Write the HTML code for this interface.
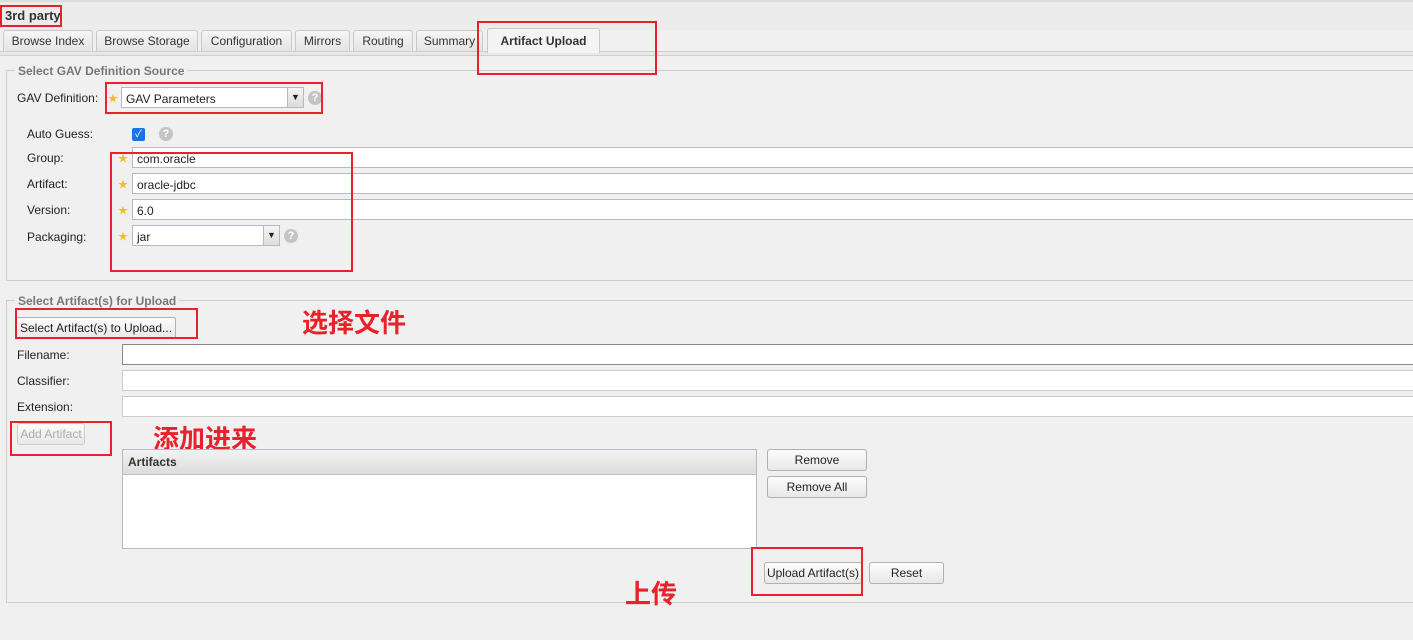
<!DOCTYPE html>
<html><head><meta charset="utf-8"><style>
*{box-sizing:border-box}
body{margin:0;width:1413px;height:640px;background:#f0f0f0;font-family:"Liberation Sans","Noto Sans CJK SC",sans-serif;font-size:12px;color:#222;position:relative;overflow:hidden}
.a{position:absolute}
.tab{position:absolute;top:30px;height:21px;border:1px solid #c8c8c8;border-bottom:none;background:linear-gradient(#f6f6f6,#e4e4e4);border-radius:3px 3px 0 0;text-align:center;line-height:20px;color:#333}
.red{position:absolute;border:2px solid #e8212a}
.fs{position:absolute;border:1px solid #cfcfcf;border-right:none}
.leg{position:absolute;background:#f0f0f0;padding:0 3px;font-weight:bold;color:#777;font-size:12px}
.inp{position:absolute;background:#fff;border:1px solid #b5b8c8;height:21px;line-height:20px;padding-left:4px;padding-top:1px}
.star{position:absolute;color:#f0c020;font-size:10px}
.q{position:absolute;width:14px;height:14px;border-radius:50%;background:#c4c4c4;color:#fff;font-weight:bold;font-size:11px;text-align:center;line-height:14px}
.btn{position:absolute;border:1px solid #b0b0b0;border-radius:3px;background:linear-gradient(#fcfcfc,#e8e8e8);text-align:center;line-height:20px;height:22px;color:#222}
.lab{position:absolute}
.cn{position:absolute;color:#e8212a;font-weight:bold;font-size:26px;line-height:30px}
.dd{position:absolute;top:0;right:0;width:16px;height:100%;background:linear-gradient(#f4f4f4,#dcdcdc);border-left:1px solid #b5b8c8;font-size:9px;text-align:center;line-height:19px}
</style></head><body>
<div class="a" style="left:0;top:0;width:1413px;height:30px;background:#ececec;border-top:2px solid #ddd"></div>
<div class="a" style="left:5px;top:8px;font-weight:bold;font-size:13px;color:#333">3rd party</div>
<div class="a" style="left:0;top:51px;width:1413px;height:5px;background:#e8e8e8;border-top:1px solid #cfcfcf;border-bottom:1px solid #cfcfcf"></div>
<div class="tab" style="left:3px;width:90px">Browse Index</div>
<div class="tab" style="left:96px;width:102px">Browse Storage</div>
<div class="tab" style="left:201px;width:91px">Configuration</div>
<div class="tab" style="left:295px;width:55px">Mirrors</div>
<div class="tab" style="left:353px;width:60px">Routing</div>
<div class="tab" style="left:416px;width:67px">Summary</div>
<div class="tab" style="left:487px;width:113px;top:28px;height:25px;background:#f4f4f4;font-weight:bold;line-height:24px">Artifact Upload</div>

<div class="fs" style="left:6px;top:70px;width:1407px;height:211px"></div>
<div class="leg" style="left:15px;top:64px">Select GAV Definition Source</div>
<div class="lab" style="left:17px;top:91px">GAV Definition:</div>
<div class="star" style="left:108px;top:90px">★</div>
<div class="inp" style="left:121px;top:87px;width:183px">GAV Parameters<div class="dd">▼</div></div>
<div class="q" style="left:308px;top:91px">?</div>
<div class="lab" style="left:27px;top:127px">Auto Guess:</div>
<div class="a" style="left:132px;top:128px;width:13px;height:13px;background:#1a73e8;border-radius:2px;color:#fff;font-size:10px;line-height:13px;text-align:center">✓</div>
<div class="q" style="left:159px;top:127px">?</div>
<div class="lab" style="left:27px;top:151px">Group:</div>
<div class="star" style="left:118px;top:150px">★</div>
<div class="inp" style="left:132px;top:147px;width:1290px">com.oracle</div>
<div class="lab" style="left:27px;top:177px">Artifact:</div>
<div class="star" style="left:118px;top:176px">★</div>
<div class="inp" style="left:132px;top:173px;width:1290px">oracle-jdbc</div>
<div class="lab" style="left:27px;top:203px">Version:</div>
<div class="star" style="left:118px;top:202px">★</div>
<div class="inp" style="left:132px;top:199px;width:1290px">6.0</div>
<div class="lab" style="left:27px;top:230px">Packaging:</div>
<div class="star" style="left:118px;top:228px">★</div>
<div class="inp" style="left:132px;top:225px;width:148px">jar<div class="dd">▼</div></div>
<div class="q" style="left:284px;top:229px">?</div>

<div class="fs" style="left:6px;top:300px;width:1407px;height:303px"></div>
<div class="leg" style="left:15px;top:294px">Select Artifact(s) for Upload</div>
<div class="btn" style="left:16px;top:317px;width:160px;border-radius:2px">Select Artifact(s) to Upload...</div>
<div class="cn" style="left:302px;top:308px">选择文件</div>
<div class="lab" style="left:17px;top:348px">Filename:</div>
<div class="inp" style="left:122px;top:344px;width:1300px;border-color:#888"></div>
<div class="lab" style="left:17px;top:374px">Classifier:</div>
<div class="inp" style="left:122px;top:370px;width:1300px;border-color:#ccc"></div>
<div class="lab" style="left:17px;top:400px">Extension:</div>
<div class="inp" style="left:122px;top:396px;width:1300px;border-color:#ccc"></div>
<div class="btn" style="left:17px;top:423px;width:68px;color:#aaa;border-color:#ccc">Add Artifact</div>
<div class="cn" style="left:153px;top:424px">添加进来</div>
<div class="a" style="left:122px;top:449px;width:635px;height:100px;background:#fff;border:1px solid #b5b8c8"></div>
<div class="a" style="left:123px;top:450px;width:633px;height:25px;background:linear-gradient(#f2f2f2,#dcdcdc);border-bottom:1px solid #c0c0c0;font-weight:bold;padding:5px 5px;color:#333">Artifacts</div>
<div class="btn" style="left:767px;top:449px;width:100px">Remove</div>
<div class="btn" style="left:767px;top:476px;width:100px">Remove All</div>
<div class="btn" style="left:764px;top:562px;width:98px">Upload Artifact(s)</div>
<div class="btn" style="left:869px;top:562px;width:75px">Reset</div>
<div class="cn" style="left:625px;top:579px">上传</div>

<div class="red" style="left:0;top:5px;width:62px;height:22px"></div>
<div class="red" style="left:477px;top:21px;width:180px;height:54px"></div>
<div class="red" style="left:105px;top:82px;width:218px;height:32px"></div>
<div class="red" style="left:110px;top:152px;width:243px;height:120px"></div>
<div class="red" style="left:15px;top:308px;width:183px;height:31px"></div>
<div class="red" style="left:10px;top:421px;width:102px;height:35px"></div>
<div class="red" style="left:751px;top:547px;width:112px;height:49px"></div>
</body></html>
